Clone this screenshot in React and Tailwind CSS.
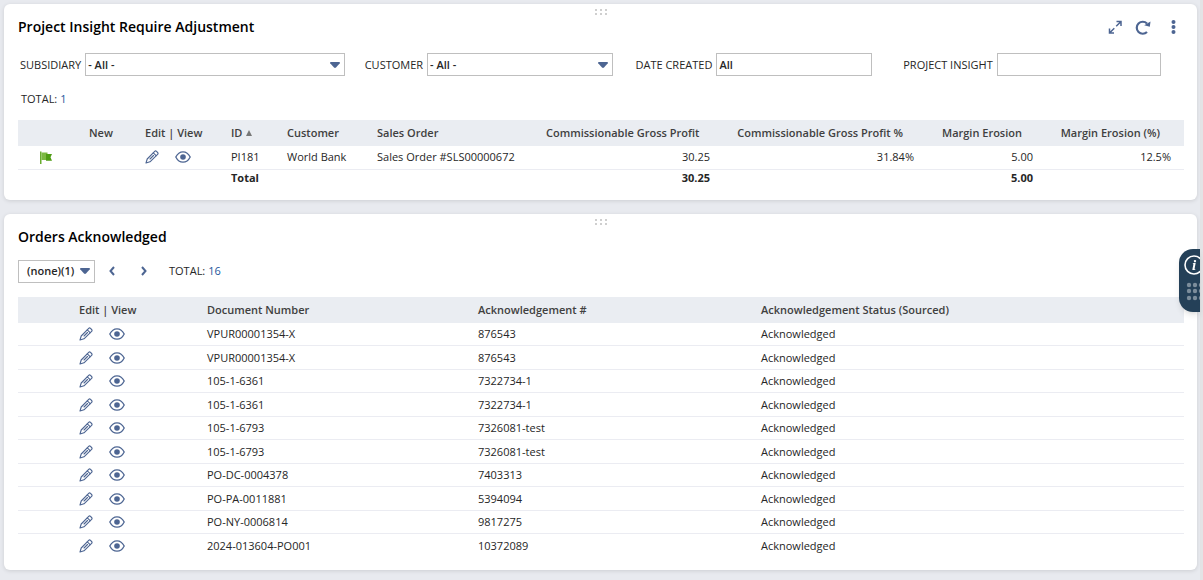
import React from 'react';

const orders = [
  ['VPUR00001354-X', '876543'],
  ['VPUR00001354-X', '876543'],
  ['105-1-6361', '7322734-1'],
  ['105-1-6361', '7322734-1'],
  ['105-1-6793', '7326081-test'],
  ['105-1-6793', '7326081-test'],
  ['PO-DC-0004378', '7403313'],
  ['PO-PA-0011881', '5394094'],
  ['PO-NY-0006814', '9817275'],
  ['2024-013604-PO001', '10372089'],
];

function PencilIcon() {
  return (
    <svg className="block h-[14px] w-[14px]" viewBox="0 0 14 14" fill="none" stroke="#4d6592" strokeWidth="1.1" strokeLinejoin="round" strokeLinecap="round" aria-hidden="true">
      <path d="M1 13l1.200-4L9.700 1.400q.9-.9 1.800 0l1.100 1.100q.9.900 0 1.800L5 11.800z" />
      <path d="M8.300 2.900l2.800 2.800M5 9l3.500-3.500" />
    </svg>
  );
}

function EyeIcon() {
  return (
    <svg className="block h-3 w-4" viewBox="0 0 16 12" fill="none" aria-hidden="true">
      <path d="M.8 6Q3.4.8 8 .8T15.200 6Q12.600 11.200 8 11.200T.8 6z" stroke="#4d6592" strokeWidth="1.300" />
      <circle cx="8" cy="6" r="2.800" fill="#4d6592" />
    </svg>
  );
}

function Caret() {
  return (
    <svg className="block h-[6px] w-[10px]" viewBox="0 0 10 6" fill="#4d6592" aria-hidden="true">
      <path d="M.8 0h8.400q1 .1.6 1.300L6 5.500q-1 .8-2 0L.2 1.300Q-.2.1.8 0z" />
    </svg>
  );
}

function Grip() {
  return (
    <svg className="absolute left-1/2 top-1 h-2 w-[14px] -translate-x-1/2" viewBox="0 0 14 8" fill="#cfcfcf" aria-hidden="true">
      <path d="M1 1h2v2H1zM6 1h2v2H6zM11 1h2v2h-2zM1 5h2v2H1zM6 5h2v2H6zM11 5h2v2h-2z" />
    </svg>
  );
}

function Actions() {
  return (
    <div className="flex items-center gap-4">
      <a href="#edit" aria-label="Edit"><PencilIcon /></a>
      <a href="#view" aria-label="View"><EyeIcon /></a>
    </div>
  );
}

function Card({ title, tools, children }) {
  return (
    <section className="relative rounded-md bg-white px-[14px] pt-[13px] pb-3 shadow-[0_1px_4px_rgba(0,0,0,0.12)]">
      <Grip />
      <div className="flex h-5 items-center justify-between">
        <h2 className="text-sm font-semibold text-black">{title}</h2>
        {tools}
      </div>
      {children}
    </section>
  );
}

function SelectBox({ id, label, className }) {
  return (
    <div className={'flex items-center gap-1 ' + className}>
      <label htmlFor={id}>{label}</label>
      <div className="relative min-w-0 flex-1">
        <select id={id} className="block h-[23px] w-full appearance-none border border-[#bfbfbf] bg-white pl-[2px] font-semibold outline-none">
          <option>- All -</option>
        </select>
        <div className="pointer-events-none absolute inset-y-0 right-[5px] flex items-center"><Caret /></div>
      </div>
    </div>
  );
}

function TextBox({ id, label, value, className }) {
  return (
    <div className={'flex items-center gap-1 ' + className}>
      <label htmlFor={id}>{label}</label>
      <input id={id} type="text" defaultValue={value} className="block h-[23px] w-full min-w-0 flex-1 border border-[#bfbfbf] bg-white pl-[2px] font-semibold outline-none" />
    </div>
  );
}

export default function App() {
  return (
    <div className="flex min-h-screen bg-[#e8eaef] font-['Open_Sans','Noto_Sans',sans-serif] text-[11px] leading-4 text-[#262626]">
      <main className="flex min-w-0 flex-1 flex-col gap-[14px] pt-1 pr-[3px] pb-2 pl-1">
        <Card
          title="Project Insight Require Adjustment"
          tools={
            <div className="flex items-center gap-3 text-[#4d6592]">
              <button type="button" aria-label="Expand">
                <svg className="block h-4 w-4" viewBox="0 0 16 16" fill="none" stroke="currentColor" strokeWidth="1.500" aria-hidden="true">
                  <path d="M9.500 2.500h4.500V7M14 2.500L9.200 7.300M7 14H2.500V9.500M2.500 14L7.300 9.200" />
                </svg>
              </button>
              <button type="button" aria-label="Refresh">
                <svg className="block h-4 w-4" viewBox="0 0 16 16" fill="none" aria-hidden="true">
                  <path d="M12 13A6 6 0 1 1 12 4.500" stroke="currentColor" strokeWidth="2.200" />
                  <path d="M15.500 2.500L14.800 7.800L9.200 6.200z" fill="currentColor" />
                </svg>
              </button>
              <button type="button" aria-label="Menu" className="px-[2px]">
                <svg className="block h-4 w-4" viewBox="0 0 16 16" fill="currentColor" aria-hidden="true">
                  <circle cx="8.500" cy="3" r="2" /><circle cx="8.500" cy="8" r="2" /><circle cx="8.500" cy="13" r="2" />
                </svg>
              </button>
            </div>
          }
        >
          <form className="mt-4 grid grid-cols-[347fr_271fr_268fr_280fr]">
            <SelectBox id="subsidiary" label="SUBSIDIARY" className="mr-5 pl-[2px]" />
            <SelectBox id="customer" label="CUSTOMER" className="mr-[22px]" />
            <TextBox id="created" label="DATE CREATED" value="All" className="mr-[31px]" />
            <TextBox id="insight" label="PROJECT INSIGHT" value="" className="mr-[22px]" />
          </form>
          <p className="mt-[15px] pl-[3px]">TOTAL: <span className="text-[#24569c]">1</span></p>
          <table className="mt-[13px] mb-[2px] w-full table-fixed border-collapse text-left">
            <colgroup>
              <col className="w-[63px]" /><col className="w-[56px]" /><col className="w-[86px]" /><col className="w-[56px]" /><col className="w-[90px]" />
              <col className="w-[177px]" /><col className="w-[177px]" /><col className="w-[204px]" /><col className="w-[119px]" /><col className="w-[138px]" />
            </colgroup>
            <thead>
              <tr className="h-[26px] bg-[#eaedf2] whitespace-nowrap text-[#404040] *:font-semibold">
                <th></th>
                <th className="pl-2">New</th>
                <th className="pl-2">Edit | View</th>
                <th className="pl-2">
                  <div className="flex items-center gap-1">
                    ID
                    <svg className="h-[6px] w-[6px]" viewBox="0 0 6 6" fill="#777" aria-hidden="true"><path d="M3 0l3 6H0z" /></svg>
                  </div>
                </th>
                <th className="pl-2">Customer</th>
                <th className="pl-2">Sales Order</th>
                <th className="pr-6 text-right">Commissionable Gross Profit</th>
                <th className="pr-6 text-right">Commissionable Gross Profit %</th>
                <th className="pr-6 text-right">Margin Erosion</th>
                <th className="pr-6 text-right">Margin Erosion (%)</th>
              </tr>
            </thead>
            <tbody className="whitespace-nowrap">
              <tr className="h-[23px] border-b border-[#ebecf2]">
                <td className="pl-[22px]">
                  <svg className="block h-[13px] w-3" viewBox="0 0 12 13" aria-hidden="true">
                    <path d="M0 .5h1.500V13H0z" fill="#69ad2f" />
                    <path d="M1.500 1.500h6V9h-6z" fill="#7cb842" />
                    <path d="M6 3h6l-1.500 3.200L12 9.800H6z" fill="#4f9c14" />
                  </svg>
                </td>
                <td></td>
                <td className="pl-2"><Actions /></td>
                <td className="pl-2">PI181</td>
                <td className="pl-2">World Bank</td>
                <td className="pl-2">Sales Order #SLS00000672</td>
                <td className="pr-[13px] text-right">30.25</td>
                <td className="pr-[13px] text-right">31.84%</td>
                <td className="pr-[13px] text-right">5.00</td>
                <td className="pr-[13px] text-right">12.5%</td>
              </tr>
              <tr className="font-bold">
                <td colSpan={3}></td>
                <td className="pl-2">Total</td>
                <td colSpan={2}></td>
                <td className="pr-[13px] text-right">30.25</td>
                <td></td>
                <td className="pr-[13px] text-right">5.00</td>
                <td></td>
              </tr>
            </tbody>
          </table>
        </Card>

        <Card title="Orders Acknowledged">
          <div className="mt-[13px] flex items-center">
            <div className="relative">
              <select aria-label="Page" className="block h-[23px] w-[77px] appearance-none border border-[#bfbfbf] bg-white pl-2 font-semibold outline-none">
                <option>(none)(1)</option>
              </select>
              <div className="pointer-events-none absolute inset-y-0 right-[5px] flex items-center"><Caret /></div>
            </div>
            <button type="button" aria-label="Previous page" className="ml-[11px] px-[2px]">
              <svg className="block h-[10px] w-2" viewBox="0 0 8 10" fill="none" stroke="#4d6592" strokeWidth="2" aria-hidden="true"><path d="M6 1L2.500 5L6 9" /></svg>
            </button>
            <button type="button" aria-label="Next page" className="ml-5 px-[2px]">
              <svg className="block h-[10px] w-2" viewBox="0 0 8 10" fill="none" stroke="#4d6592" strokeWidth="2" aria-hidden="true"><path d="M2 1l3.500 4L2 9" /></svg>
            </button>
            <p className="ml-[19px]">TOTAL: <span className="text-[#24569c]">16</span></p>
          </div>
          <table className="mt-[14px] w-full table-fixed border-collapse text-left">
            <colgroup>
              <col className="w-[53px]" /><col className="w-[128px]" /><col className="w-[271px]" /><col className="w-[283px]" /><col className="w-[431px]" />
            </colgroup>
            <thead>
              <tr className="h-[26px] bg-[#eaedf2] text-[#404040] *:font-semibold">
                <th></th>
                <th className="pl-2">Edit | View</th>
                <th className="pl-2">Document Number</th>
                <th className="pl-2">Acknowledgement #</th>
                <th className="pl-2">Acknowledgement Status (Sourced)</th>
              </tr>
            </thead>
            <tbody>
              {orders.map(([doc, ack], i) => (
                <tr key={i} className="border-b border-[#ebecf2] last:border-b-0 odd:h-[23px] even:h-6">
                  <td></td>
                  <td className="pl-2"><Actions /></td>
                  <td className="pl-2">{doc}</td>
                  <td className="pl-2">{ack}</td>
                  <td className="pl-2">Acknowledged</td>
                </tr>
              ))}
            </tbody>
          </table>
        </Card>
      </main>
      <div className="w-[3px] shrink-0 bg-[#e3e3e5]"></div>
      <button type="button" aria-label="Information" className="fixed top-[249px] right-[3px] overflow-hidden rounded-l-[14px] bg-[#244058] shadow-md">
        <svg className="block h-[63px] w-[21px]" viewBox="0 0 21 63" aria-hidden="true">
          <circle cx="15" cy="16" r="9" fill="none" stroke="#fff" strokeWidth="1.600" />
          <text x="13" y="21" fill="#fff" fontFamily="Liberation Serif, serif" fontStyle="italic" fontWeight="700" fontSize="15">i</text>
          <g fill="#7c8d9b">
            <circle cx="10" cy="36" r="2.200" /><circle cx="16" cy="36" r="2.200" /><circle cx="22" cy="36" r="2.200" />
            <circle cx="10" cy="42" r="2.200" /><circle cx="16" cy="42" r="2.200" /><circle cx="22" cy="42" r="2.200" />
            <circle cx="10" cy="49" r="2.200" /><circle cx="16" cy="49" r="2.200" /><circle cx="22" cy="49" r="2.200" />
          </g>
        </svg>
      </button>
    </div>
  );
}
